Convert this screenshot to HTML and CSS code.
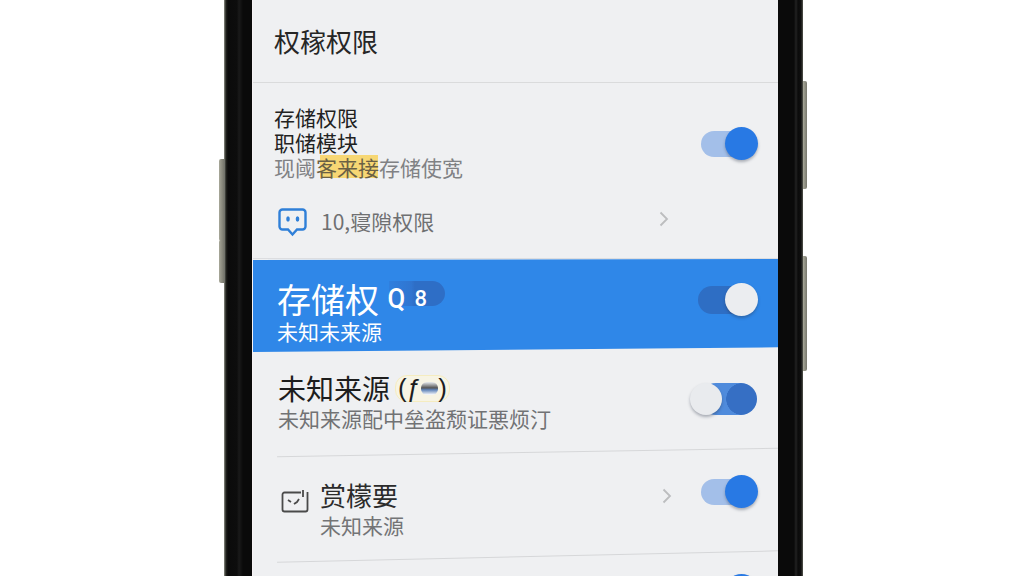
FILE: index.html
```html
<!DOCTYPE html>
<html lang="zh-CN">
<head>
  <meta charset="UTF-8" />
  <meta name="viewport" content="width=device-width, initial-scale=1.0" />
  <title>权限</title>
  <link rel="stylesheet" href="styles.css">
</head>
<body>

  <div class="phone">
    <span class="side-btn side-l1"></span>
    <span class="side-btn side-l2"></span>
    <span class="side-btn side-r1"></span>
    <span class="side-btn side-r2"></span>

    <main class="screen">
      <header class="page-head">权稼权限</header>

      <section class="perm">
        <div class="perm-top">
          <div class="perm-text">
            <div class="perm-title">存储权限</div>
            <div class="perm-title">职储模块</div>
            <div class="perm-desc">现阈<mark>客来接</mark>存储使宽</div>
          </div>
          <div class="toggle toggle-on"><span class="knob"></span></div>
        </div>
        <div class="perm-link">
          <svg class="icon-chat" width="30" height="30" viewBox="0 0 30 30" fill="none">
            <path d="M4.500 2.500h20a3 3 0 0 1 3 3v14a3 3 0 0 1-3 3h-5.500l-4.500 5-4.500-5H4.500a3 3 0 0 1-3-3v-14a3 3 0 0 1 3-3z" stroke="#2f7fd8" stroke-width="2.400"/>
            <ellipse cx="10" cy="12" rx="1.800" ry="2.800" fill="#2f7fd8"/>
            <ellipse cx="19.500" cy="12" rx="1.800" ry="2.800" fill="#2f7fd8"/>
          </svg>
          <span class="link-text">10,寝隙权限</span>
          <svg class="chevron chevron-link" width="10" height="16" viewBox="0 0 10 16" fill="none">
            <path d="M1.500 1.500L8 8l-6.500 6.500" stroke="#bcbdbf" stroke-width="1.800"/>
          </svg>
        </div>
      </section>

      <section class="row-active">
        <div class="active-text">
          <div class="active-title">存储权<span class="pill"><b class="pill-q">Q</b><b class="pill-eight">8</b></span></div>
          <div class="active-sub">未知未来源</div>
        </div>
        <div class="toggle toggle-white"><span class="knob"></span></div>
      </section>

      <section class="row-source">
        <div class="source-text">
          <div class="source-title">未知来源<span class="tag"><span>(</span><span>ƒ</span><i class="tag-mini"></i><span>)</span></span></div>
          <div class="source-desc">未知来源配中垒盗颓证悪烦汀</div>
        </div>
        <div class="toggle toggle-off"><span class="knob"></span></div>
      </section>
      <div class="sep"></div>

      <section class="row-summary">
        <svg class="icon-card" width="28" height="24" viewBox="0 0 28 24" fill="none">
          <path d="M20 3.500H3.500A2 2 0 0 0 1.500 5.500v15a2 2 0 0 0 2 2h21a2 2 0 0 0 2-2V3" stroke="#4a4a4a" stroke-width="1.800"/>
          <path d="M22 1v7M7 11l3 2M13 15l3-2 2-3" stroke="#4a4a4a" stroke-width="1.800"/>
        </svg>
        <div class="summary-text">
          <div class="summary-title">赏檬要</div>
          <div class="summary-sub">未知来源</div>
        </div>
        <svg class="chevron" width="10" height="16" viewBox="0 0 10 16" fill="none">
          <path d="M1.500 1.500L8 8l-6.500 6.500" stroke="#bcbdbf" stroke-width="1.800"/>
        </svg>
        <div class="toggle toggle-on"><span class="knob"></span></div>
      </section>
      <div class="sep sep-last"></div>

      <section class="row-peek">
        <div class="toggle toggle-on"><span class="knob"></span></div>
      </section>
    </main>
  </div>

</body>
</html>
```

FILE: styles.css
```css
* {
  box-sizing: border-box;
}
html, body {
  margin: 0;
  height: 576px;
  overflow: hidden;
}
body {
  background: #fff;
  font-family: "Noto Sans CJK SC", "Noto Sans", sans-serif;
  padding-left: 224px;
}

.phone {
  position: relative;
  width: 579px;
  height: 576px;
  padding: 0 25px 0 28px;
  background: linear-gradient(90deg, #8d8f86 0, #23241f 2px, #0b0b0b 4px, #0d0d0d 13px, #1a1a1a 15px, #0a0a0a 19px, #0a0a0a 100%);
}
.phone::after {
  content: "";
  position: absolute;
  top: 0;
  right: 0;
  width: 25px;
  height: 100%;
  background: linear-gradient(90deg, #0a0a0a 0, #0a0a0a 16px, #222 18px, #0b0b0b 20px, #101010 23px, #55564f 25px);
}

.side-btn {
  position: absolute;
  width: 5px;
  background: linear-gradient(90deg, #a8a899, #77776d);
  border-radius: 2px 0 0 2px;
}
.side-l1 { left: -5px; top: 159px; height: 82px; }
.side-l2 { left: -5px; top: 240px; height: 43px; }
.side-r1 { right: -4px; top: 81px; height: 108px; width: 4px; border-radius: 0 2px 2px 0; }
.side-r2 { right: -4px; top: 256px; height: 115px; width: 4px; border-radius: 0 2px 2px 0; }

.screen {
  height: 576px;
  overflow: hidden;
  background: #eff0f2;
  border-left: 1px solid #f7f3f5;
  color: #1d1d1d;
}

.page-head {
  height: 83px;
  padding: 22px 0 0 21px;
  font-size: 26px;
  line-height: 38px;
  color: #262626;
  border-bottom: 1px solid #dadbdc;
}

/* toggles */
.toggle {
  position: relative;
  flex: none;
  width: 57px;
  height: 33px;
  display: flex;
  align-items: center;
  justify-content: flex-end;
}
.toggle::before {
  content: "";
  position: absolute;
  left: 0;
  right: 8px;
  top: 4px;
  bottom: 3px;
  border-radius: 14px;
  background: #a3bfe9;
}
.knob {
  position: relative;
  width: 33px;
  height: 33px;
  border-radius: 50%;
  background: #2879e4;
  box-shadow: 0 2px 3px rgba(40, 50, 70, 0.35);
}
.toggle-white::before {
  left: -3px;
  top: 3px;
  bottom: 2px;
  background: #2e6ec4;
}
.toggle-white .knob {
  background: #ebedf0;
}
.toggle-off {
  width: 67px;
  height: 32px;
  justify-content: flex-start;
}
.toggle-off::before {
  left: 10px;
  right: 0;
  top: 0;
  bottom: 0;
  border-radius: 16px;
  background: radial-gradient(circle 16px at calc(100% - 15px) 50%, #366fc4 97%, transparent 100%), #4f8bdc;
}
.toggle-off .knob {
  width: 32px;
  height: 32px;
  background: #e9ebee;
}

/* storage block */
.perm {
  height: 176px;
  padding: 22px 20px 0 21px;
  border-bottom: 1px solid #dcdde0;
}
.perm-top {
  display: flex;
  align-items: center;
  justify-content: space-between;
}
.perm-top .toggle {
  margin-top: 2px;
}
.perm-title {
  font-size: 21px;
  line-height: 25px;
  color: #222;
}
.perm-desc {
  font-size: 21px;
  line-height: 25px;
  color: #808184;
}
.perm-desc mark {
  color: #6a6045;
  background: linear-gradient(#f7d774, #f7d774) no-repeat 4px center / calc(100% - 5px) 78%;
}
.perm-link {
  display: flex;
  align-items: center;
  height: 40px;
  margin-top: 21px;
  padding-right: 87px;
}
.icon-chat {
  flex: none;
  margin: 2px 13px 0 4px;
}
.link-text {
  flex: 1;
  font-size: 21px;
  color: #6f7072;
}
.chevron-link {
  margin: -4px 2px 0 0;
}

/* selected row */
.row-active {
  height: 93px;
  padding: 20px 20px 0 24px;
  display: flex;
  justify-content: space-between;
  align-items: flex-start;
  background: #2f87e8;
  clip-path: polygon(0 1px, 100% 0, 100% 95%, 0 100%);
  color: #fff;
}
.row-active .toggle {
  margin-top: 4px;
}
.active-title {
  display: flex;
  align-items: center;
  font-size: 34px;
  line-height: 40px;
}
.active-sub {
  font-size: 21px;
  line-height: 24px;
}
.pill {
  position: relative;
  display: flex;
  align-items: center;
  height: 26px;
  width: 56px;
  margin-left: 10px;
  font-family: "Roboto", sans-serif;
  font-size: 27px;
  line-height: 26px;
}
.pill::before {
  content: "";
  position: absolute;
  left: 0;
  right: 0;
  top: -5px;
  height: 25px;
  border-radius: 0 13px 13px 0;
  background: linear-gradient(90deg, #2f7fde 0, #3075d0 40%, #2e6ec6 46%);
}
.pill b {
  position: relative;
  font-weight: 500;
}
.pill-q {
  display: inline-block;
  transform: scaleX(0.95);
  margin: 0 9px 0 -2px;
}
.pill-eight {
  font-size: 22px;
}

/* unknown sources */
.row-source {
  height: 100px;
  padding: 18px 21px 0 25px;
  display: flex;
  justify-content: space-between;
  align-items: flex-start;
}
.source-title {
  display: flex;
  align-items: center;
  font-size: 28px;
  line-height: 36px;
  color: #1d1d1d;
}
.source-desc {
  font-size: 21px;
  line-height: 24px;
  color: #717274;
}
.row-source .toggle {
  margin-top: 13px;
}
.tag {
  display: flex;
  align-items: center;
  justify-content: space-between;
  width: 55px;
  height: 27px;
  margin-left: 5px;
  padding: 0 2px;
  font-family: "Liberation Sans", sans-serif;
  font-size: 26px;
  line-height: 27px;
  background: #f7f4e4;
  border: 1px solid #f5ecc0;
  border-radius: 12px;
}
.tag-mini {
  width: 17px;
  height: 13px;
  border-radius: 6px;
  background: linear-gradient(180deg, #e8ecef 0, #555 45%, #5f83b8 60%, #fff 100%);
}

.sep {
  height: 1px;
  margin-left: 24px;
  background: #d6d7d9;
  transform: rotate(-0.95deg);
}
.sep-last {
  transform: rotate(-1.3deg);
}

.row-summary {
  height: 103px;
  padding: 0 20px 0 28px;
  display: flex;
  align-items: center;
}
.icon-card {
  flex: none;
  margin-top: -7px;
  margin-right: 11px;
}
.summary-text {
  flex: 1;
  margin-top: 7px;
}
.summary-title {
  font-size: 26px;
  line-height: 33px;
  color: #2b2b2b;
}
.summary-sub {
  font-size: 21px;
  line-height: 28px;
  color: #737476;
}
.row-summary .chevron {
  margin-right: 29px;
  margin-top: -17px;
}
.row-summary .toggle {
  margin-top: -26px;
}

.row-peek {
  display: flex;
  justify-content: flex-end;
  padding: 17px 20px 0 0;
}
```
